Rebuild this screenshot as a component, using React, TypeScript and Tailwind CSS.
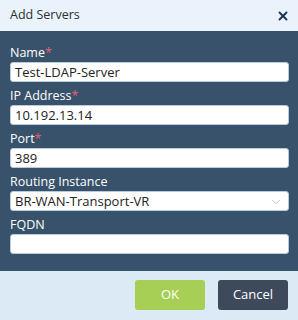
import React from 'react'
import { X, ChevronDown } from 'lucide-react'

const fields = [
  { label: 'Name', required: true, value: 'Test-LDAP-Server' },
  { label: 'IP Address', required: true, value: '10.192.13.14' },
  { label: 'Port', required: true, value: '389' },
  { label: 'Routing Instance', required: false, value: 'BR-WAN-Transport-VR', select: true },
  { label: 'FQDN', required: false, value: '' },
]

export default function App() {
  return (
    <div
      className="w-[298px] h-[320px] flex flex-col bg-[#37526a] overflow-hidden"
      style={{ fontFamily: '"Open Sans", sans-serif' }}
    >
      {/* header */}
      <div className="h-[31px] bg-[#eaf3fb] flex items-center justify-between pl-[10px] pr-[8px]">
        <span className="text-[12.5px] text-[#2b2f36]">Add Servers</span>
        <X className="w-[14px] h-[14px] text-[#1d3553]" strokeWidth={3.2} />
      </div>

      {/* body */}
      <div className="flex-1 flex flex-col gap-[3px] pt-[11px] pl-[10px] pr-[9px]">
        {fields.map((f) => (
          <div key={f.label} className="flex flex-col">
            <label className="h-[20px] leading-[22px] text-[12.5px] text-white">
              {f.label}
              {f.required && <span className="text-[#e0607a]">*</span>}
            </label>
            <div className="relative h-[20px] bg-white rounded-[3px] border border-[#b9cadb] flex items-center px-[4px]">
              <span className="text-[13px] text-[#222] leading-none">{f.value}</span>
              {f.select && (
                <ChevronDown
                  className="absolute right-[5px] top-[3px] w-[14px] h-[14px] text-[#a9b2ba]"
                  strokeWidth={1.2}
                />
              )}
            </div>
          </div>
        ))}
      </div>

      {/* footer */}
      <div className="h-[49px] bg-[#dceaf5] flex items-center justify-end gap-[13px] pr-[10px] pb-[1px]">
        <button className="w-[70px] h-[30px] rounded-[3px] bg-[#a8cf55] text-white text-[13px]">
          OK
        </button>
        <button className="w-[70px] h-[30px] rounded-[3px] bg-[#3e4a5b] text-white text-[13px]">
          Cancel
        </button>
      </div>
    </div>
  )
}
